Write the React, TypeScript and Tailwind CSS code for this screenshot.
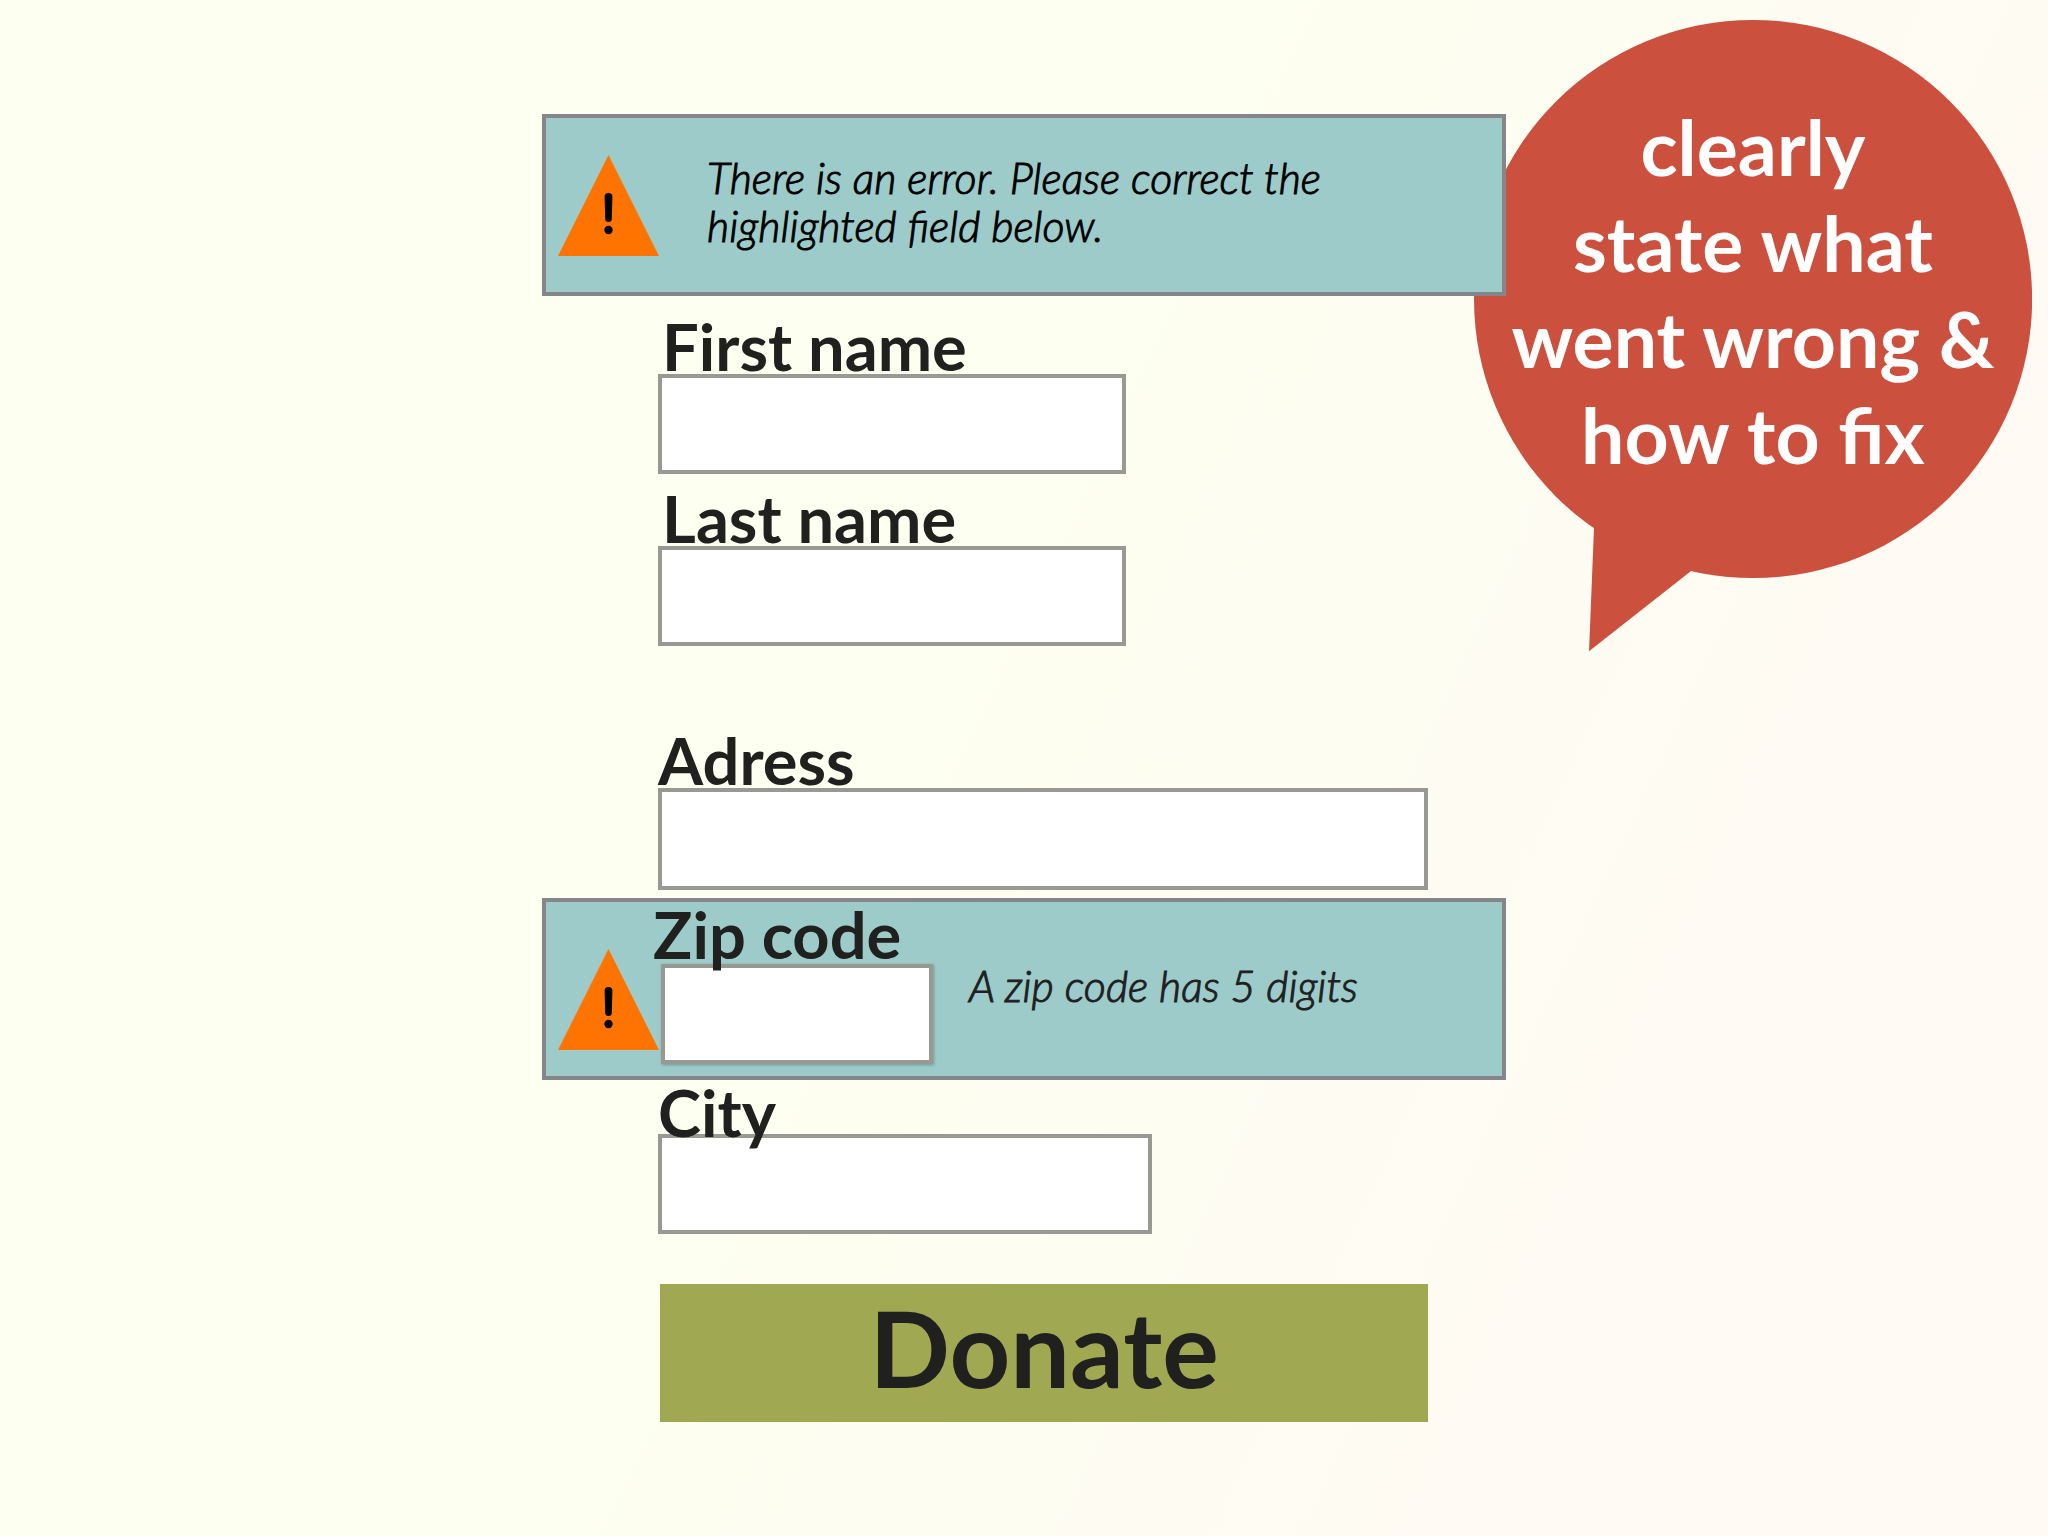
import type { ReactNode } from "react";
import { clsx } from "clsx";

const WarningIcon = ({ className }: { className?: string }) => (
    <svg viewBox="0 0 101 101" className={clsx("h-[101px] w-[101px] shrink-0", className)} aria-hidden="true">
        <path d="M50.5 0 101 101H0Z" fill="#ff7300" />
        <path d="M46.6 41.5q0-3.5 3.9-3.5t3.9 3.5l-.6 22.5q0 3-3.3 3t-3.3-3Z" fill="#000" />
        <circle cx="50.5" cy="75" r="4.2" fill="#000" />
    </svg>
);

type FieldProps = {
    id: string;
    label: string;
    className?: string;
    labelClassName?: string;
    inputClassName?: string;
};

const Field = ({ id, label, className, labelClassName, inputClassName }: FieldProps) => (
    <div className={clsx("flex flex-col items-start", className)}>
        <label
            htmlFor={id}
            className={clsx("relative z-10 h-[60px] text-[65px] leading-[64px] font-bold whitespace-nowrap", labelClassName)}
        >
            {label}
        </label>
        <input
            id={id}
            name={id}
            type="text"
            className={clsx("max-w-full border-4 border-[#999993] bg-white px-4 text-4xl outline-none", inputClassName)}
        />
    </div>
);

const ErrorPanel = ({ children, className }: { children: ReactNode; className?: string }) => (
    <div className={clsx("flex min-h-[182px] border-4 border-[#84868c] bg-[#9ccbca] pl-3", className)}>
        {children}
    </div>
);

const ErrorText = ({ children, className }: { children: ReactNode; className?: string }) => (
    <p
        role="alert"
        className={clsx("text-[43px] leading-[48px] font-light italic [-webkit-text-stroke:1px_currentColor]", className)}
    >
        {children}
    </p>
);

const SpeechBubble = () => (
    <aside className="relative mt-5 mr-4 -ml-8">
        <svg viewBox="0 0 558 632" className="absolute top-0 left-0 w-full" aria-hidden="true">
            <circle cx="279" cy="279" r="279" fill="#cb503d" />
            <path d="M120 480V507L115 631 217 551 279 500Z" fill="#cb503d" />
        </svg>
        <p className="relative pt-[78px] text-center text-[77px] leading-[96px] font-bold whitespace-nowrap text-white">
            clearly
            <br />
            state what
            <br />
            went wrong &amp;
            <br />
            how to fix
        </p>
    </aside>
);

export default function App() {
    return (
        <main className="grid min-h-screen grid-cols-[9fr_16fr_9fr] overflow-hidden bg-[linear-gradient(115deg,#fdfff0_45%,#fffbf4_80%)] font-['Lato',sans-serif] text-[#20201e]">
            <form className="relative z-10 col-start-2 pt-[114px] pb-12" onSubmit={(e) => e.preventDefault()}>
                <ErrorPanel>
                    <WarningIcon className="mt-[37px]" />
                    <ErrorText className="mt-9 ml-12 max-w-[640px] text-black">
                        There is an error. Please correct the highlighted field below.
                    </ErrorText>
                </ErrorPanel>

                <div className="pl-[116px]">
                    <Field
                        id="first-name"
                        label="First name"
                        className="mt-[18px]"
                        labelClassName="pl-1"
                        inputClassName="h-25 w-[468px]"
                    />
                    <Field
                        id="last-name"
                        label="Last name"
                        className="mt-3"
                        labelClassName="pl-1"
                        inputClassName="h-25 w-[468px]"
                    />
                    <Field id="address" label="Adress" className="mt-[82px]" inputClassName="h-[102px] w-[770px]" />
                </div>

                <ErrorPanel className="mt-2">
                    <WarningIcon className="mt-[47px]" />
                    <Field
                        id="zip"
                        label="Zip code"
                        className="pl-0.5"
                        labelClassName="mb-0.5 -ml-2"
                        inputClassName="h-25 w-[272px] shadow-[1px_1px_3px_rgba(0,0,0,0.25)]"
                    />
                    <ErrorText className="mt-[60px] ml-9">A zip code has 5 digits</ErrorText>
                </ErrorPanel>

                <div className="pl-[116px]">
                    <Field
                        id="city"
                        label="City"
                        labelClassName="-mb-1.5"
                        inputClassName="h-25 w-[494px]"
                    />
                    <button
                        type="submit"
                        className="mt-[50px] ml-0.5 h-[138px] w-[768px] max-w-full bg-[#a1a852] pb-3 text-[106px] leading-none font-bold"
                    >
                        Donate
                    </button>
                </div>
            </form>
            <SpeechBubble />
        </main>
    );
}
